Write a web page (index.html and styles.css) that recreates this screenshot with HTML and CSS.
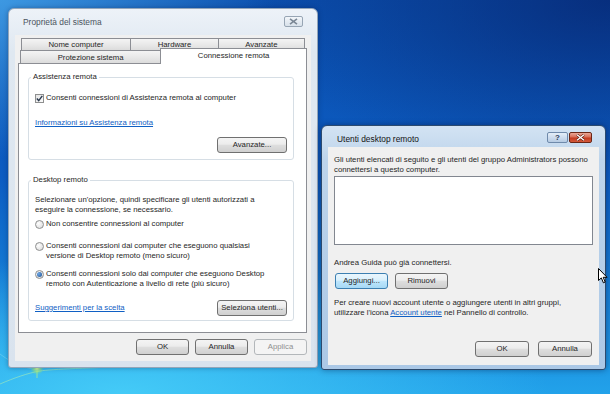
FILE: index.html
```html
<!DOCTYPE html>
<html lang="it">
<head>
<meta charset="utf-8">
<title>Proprietà del sistema</title>
<link rel="stylesheet" href="styles.css">
</head>
<body>
<div class="desktop">
  <svg class="swirl" width="140" height="60" viewBox="0 0 140 60">
    <defs>
      <radialGradient id="glow" cx="0.5" cy="0.5" r="0.5">
        <stop offset="0" stop-color="#f4ff9a" stop-opacity="0.95"/>
        <stop offset="0.45" stop-color="#b8f06a" stop-opacity="0.6"/>
        <stop offset="1" stop-color="#7fe07a" stop-opacity="0"/>
      </radialGradient>
    </defs>
    <path d="M0 44 C 14 38, 28 33, 40 31 S 90 28, 140 26" fill="none" stroke="#aef0b0" stroke-opacity="0.55" stroke-width="1"/>
    <path d="M0 14 C 10 22, 24 28, 38 30" fill="none" stroke="#9fe8f4" stroke-opacity="0.35" stroke-width="1"/>
    <path d="M37 31 L37 38" stroke="#b6ef8a" stroke-opacity="0.6" stroke-width="1.2"/>
    <circle cx="37" cy="28" r="7" fill="url(#glow)"/>
  </svg>

  <section class="win win-sys">
    <header class="titlebar">
      <span class="title">Proprietà del sistema</span>
      <span class="cap cap-close-inactive">
        <svg width="9" height="7" viewBox="0 0 9 7"><path d="M1 0.8 L8 6.2 M8 0.8 L1 6.2" stroke="#7c8896" stroke-width="1.6" fill="none"/></svg>
      </span>
    </header>
    <div class="client">
      <div class="tabs">
        <div class="tabrow row-back">
          <div class="tab">Nome computer</div>
          <div class="tab">Hardware</div>
          <div class="tab">Avanzate</div>
        </div>
        <div class="tabrow row-front">
          <div class="tab">Protezione sistema</div>
          <div class="tab tab-sel">Connessione remota</div>
        </div>
      </div>
      <div class="panel">
        <fieldset class="group g-assist">
          <legend>Assistenza remota</legend>
          <div class="check-row">
            <span class="checkbox"><svg width="7" height="7" viewBox="0 0 7 7"><path d="M0.8 3.6 L2.7 5.6 L6.3 0.9" stroke="#2b3a4e" stroke-width="1.4" fill="none"/></svg></span>
            <span>Consenti connessioni di Assistenza remota al computer</span>
          </div>
          <a class="link link-info">Informazioni su Assistenza remota</a>
          <div class="row-end"><button class="btn btn-wide">Avanzate...</button></div>
        </fieldset>
        <fieldset class="group g-desk">
          <legend>Desktop remoto</legend>
          <p class="desc">Selezionare un'opzione, quindi specificare gli utenti autorizzati a<br>eseguire la connessione, se necessario.</p>
          <div class="radio-row r1"><span class="radio"></span><span>Non consentire connessioni al computer</span></div>
          <div class="radio-row r2"><span class="radio"></span><span>Consenti connessioni dai computer che eseguono qualsiasi<br>versione di Desktop remoto (meno sicuro)</span></div>
          <div class="radio-row r3"><span class="radio radio-on"></span><span>Consenti connessioni solo dai computer che eseguono Desktop<br>remoto con Autenticazione a livello di rete (più sicuro)</span></div>
          <div class="row-between">
            <a class="link">Suggerimenti per la scelta</a>
            <button class="btn btn-wide">Seleziona utenti...</button>
          </div>
        </fieldset>
      </div>
      <div class="dlg-buttons">
        <button class="btn btn-std">OK</button>
        <button class="btn btn-std">Annulla</button>
        <button class="btn btn-std btn-disabled">Applica</button>
      </div>
    </div>
  </section>

  <section class="win win-rdu">
    <header class="titlebar">
      <span class="title">Utenti desktop remoto</span>
      <span class="caps">
        <span class="cap cap-help">?</span>
        <span class="cap cap-close">
          <svg width="9" height="7" viewBox="0 0 9 7"><path d="M1 0.8 L8 6.2 M8 0.8 L1 6.2" stroke="#5a1a10" stroke-width="2.6" fill="none"/><path d="M1 0.8 L8 6.2 M8 0.8 L1 6.2" stroke="#ffffff" stroke-width="1.4" fill="none"/></svg>
        </span>
      </span>
    </header>
    <div class="client">
      <p class="para">Gli utenti elencati di seguito e gli utenti del gruppo Administrators possono<br>connettersi a questo computer.</p>
      <div class="list"></div>
      <p class="para note-line">Andrea Guida può già connettersi.</p>
      <div class="row-btns">
        <button class="btn btn-std btn-focus">Aggiungi...</button>
        <button class="btn btn-std">Rimuovi</button>
      </div>
      <p class="para para2">Per creare nuovi account utente o aggiungere utenti in altri gruppi,<br>utilizzare l'icona <a class="link">Account utente</a> nel Pannello di controllo.</p>
      <div class="row-ok">
        <button class="btn btn-ok">OK</button>
        <button class="btn btn-ok">Annulla</button>
      </div>
    </div>
  </section>

  <svg class="cursor" width="10" height="16" viewBox="0 0 10 16">
    <path d="M0.5 0.5 L0.5 12.5 L3.3 9.9 L5.4 14.8 L7.2 14 L5.2 9.3 L9 9.3 Z" fill="#ffffff" stroke="#000000" stroke-width="1"/>
  </svg>
</div>
</body>
</html>
```

FILE: styles.css
```css
* { box-sizing: border-box; }

html, body {
  margin: 0;
  padding: 0;
}

body {
  width: 610px;
  height: 394px;
  overflow: hidden;
  font-family: "Liberation Sans", Arial, sans-serif;
  font-size: 7.75px;
  line-height: 10px;
  color: #262626;
}

.desktop {
  position: relative;
  width: 610px;
  height: 394px;
  overflow: hidden;
  background:
    radial-gradient(ellipse 60% 45% at 100% 0%, rgba(6, 36, 110, 0.75), rgba(6, 36, 110, 0) 100%),
    radial-gradient(ellipse 45% 40% at 0% 0%, rgba(70, 165, 235, 0.85), rgba(70, 165, 235, 0) 100%),
    radial-gradient(ellipse 70% 35% at 20% 100%, rgba(70, 205, 248, 0.95), rgba(70, 205, 248, 0) 100%),
    linear-gradient(to bottom, #0b4fae 0%, #0c5cc2 45%, #1784da 78%, #22a2ea 100%);
}

.swirl {
  position: absolute;
  left: 0;
  top: 340px;
}

.cursor {
  position: absolute;
  left: 598px;
  top: 268px;
}

/* ---------- windows ---------- */
.win {
  position: absolute;
  display: flex;
  flex-direction: column;
  border: 1px solid;
  border-radius: 6px 6px 3px 3px;
}

.win-sys {
  left: 8px;
  top: 8px;
  width: 310px;
  height: 360px;
  padding: 0 6px 6px;
  border-color: #93a5b9;
  background: linear-gradient(to bottom, #edf2f8 0%, #dfe8f1 12%, #d9e3ee 100%);
  box-shadow: 0 0 5px rgba(0, 20, 60, 0.35);
}

.win-rdu {
  left: 321px;
  top: 125px;
  width: 285px;
  height: 245px;
  padding: 0 6px 4px;
  border-color: #2c4a6e;
  background: linear-gradient(to bottom, #d3e3f3 0%, #bdd4eb 14%, #abc8e6 100%);
  box-shadow: 0 0 6px rgba(0, 20, 60, 0.45);
}

.titlebar {
  display: flex;
  align-items: flex-start;
  flex: none;
}

.win-sys .titlebar {
  height: 26px;
  padding: 7px 8px 0 8px;
}

.win-rdu .titlebar {
  height: 21px;
  padding: 5px 7px 0 9px;
}

.title {
  font-size: 8.4px;
  line-height: 12px;
  white-space: nowrap;
}

.win-sys .title { color: #4a545e; }
.win-rdu .title { color: #141414; margin-top: 2px; }

.cap {
  display: flex;
  align-items: center;
  justify-content: center;
  height: 11px;
  border: 1px solid;
  border-radius: 2px;
}

.cap-close-inactive {
  margin-left: auto;
  width: 19px;
  border-color: #97a5b4;
  background: linear-gradient(to bottom, #f3f6fa 0%, #e4ebf2 50%, #d8e1ea 100%);
}

.caps {
  margin-left: auto;
  margin-top: 1px;
  display: flex;
  gap: 1px;
}

.cap-help {
  width: 21px;
  border-color: #6f8aab;
  background: linear-gradient(to bottom, #e4eef8 0%, #cddcee 50%, #b6cbe3 100%);
  color: #2a3d57;
  font-size: 8px;
  font-weight: bold;
  line-height: 9px;
}

.cap-close {
  width: 23px;
  border-color: #6a2616;
  background: linear-gradient(to bottom, #eaa797 0%, #d86e58 45%, #c3391f 55%, #d35a3c 100%);
}

.client {
  flex: 1;
  display: flex;
  flex-direction: column;
  background: #f0f0f0;
}

.win-sys .client { padding: 3px 4px 0 3px; }
.win-rdu .client { padding: 8px 6px 8px 6px; }

/* ---------- tabs ---------- */
.tabs {
  display: flex;
  flex-direction: column;
}

.tabrow { display: flex; }

.row-back {
  height: 12px;
  margin: 0 2px 0 3px;
}

.row-front {
  height: 13px;
  margin: 0 0 0 2px;
}

.tab {
  flex: 1 1 auto;
  border: 1px solid #8c8e94;
  border-bottom: none;
  background: linear-gradient(to bottom, #f4f4f4 0%, #e9e9e9 50%, #dcdcdc 100%);
  text-align: center;
  white-space: nowrap;
  padding-top: 1px;
}

.row-front .tab { padding-top: 2px; }

.tab + .tab { margin-left: -1px; }

.row-front .tab-sel {
  position: relative;
  z-index: 1;
  height: 16px;
  margin-top: -2px;
  background: #ffffff;
  padding-top: 2px;
}

.panel {
  height: 270px;
  border: 1px solid #8c8e94;
  background: #ffffff;
  padding: 8px 12px 0 9px;
}

/* ---------- groups ---------- */
.group {
  margin: 0;
  min-width: 0;
  border: 1px solid #d6dee5;
  border-radius: 3px;
  padding: 0 6px 6px 6px;
}

.group legend {
  margin-left: -4px;
  padding: 0 2px;
  line-height: 10px;
}

.g-desk {
  margin-top: 15px;
  padding-bottom: 4px;
}

.check-row {
  display: flex;
  align-items: center;
  gap: 2px;
  margin-top: 11px;
  height: 10px;
  white-space: nowrap;
}

.checkbox {
  flex: none;
  width: 9px;
  height: 9px;
  border: 1px solid #8e8f8f;
  background: linear-gradient(to bottom right, #e4e4e4, #fbfbfb);
  display: flex;
  align-items: center;
  justify-content: center;
}

.link {
  color: #1060c4;
  text-decoration: underline;
  white-space: nowrap;
}

.link-info {
  display: block;
  margin-top: 15px;
}

.row-end {
  display: flex;
  justify-content: flex-end;
  margin-top: 9px;
}

.desc {
  margin: 10px 0 0;
  white-space: nowrap;
}

.radio-row {
  display: flex;
  align-items: flex-start;
  gap: 2px;
  white-space: nowrap;
}

.r1 { margin-top: 4px; }
.r2 { margin-top: 12px; }
.r3 { margin-top: 8px; }

.radio {
  flex: none;
  width: 9px;
  height: 9px;
  margin-top: 0.5px;
  border: 1px solid #8e8f8f;
  border-radius: 50%;
  background: radial-gradient(circle at 35% 35%, #fdfdfd, #d9d9d9);
  display: flex;
  align-items: center;
  justify-content: center;
}

.radio-on::after {
  content: "";
  width: 5px;
  height: 5px;
  border-radius: 50%;
  background: radial-gradient(circle at 35% 35%, #6fa8e6, #1d4f8e);
}

.row-between {
  display: flex;
  align-items: center;
  justify-content: space-between;
  margin-top: 11px;
}

/* ---------- buttons ---------- */
.btn {
  font: inherit;
  font-size: 7.75px;
  height: 16px;
  padding: 0;
  border: 1px solid #707070;
  border-radius: 3px;
  background: linear-gradient(to bottom, #f4f4f4 0%, #ececec 45%, #dedede 50%, #d0d0d0 100%);
  color: #262626;
  line-height: 14px;
  text-align: center;
  white-space: nowrap;
}

.btn-wide { width: 70px; }
.btn-std { width: 53px; }
.btn-ok { width: 54px; }

.btn-disabled {
  border-color: #b3b7ba;
  background: #f4f4f4;
  color: #8f8f8f;
}

.btn-focus {
  border-color: #3c7fb1;
  background: linear-gradient(to bottom, #eaf6fd 0%, #d9f0fc 45%, #bee6fd 50%, #a7d9f5 100%);
}

.dlg-buttons {
  display: flex;
  justify-content: flex-end;
  gap: 6px;
  margin-top: 6px;
}

/* ---------- right dialog ---------- */
.para {
  margin: 0;
  white-space: nowrap;
}

.list {
  flex: none;
  height: 69px;
  margin-top: 1px;
  border: 1px solid #828790;
  background: #ffffff;
}

.note-line { margin-top: 13px; }

.row-btns {
  display: flex;
  gap: 7px;
  margin-top: 5px;
  padding-left: 1px;
}

.para2 { margin-top: 9px; }

.row-ok {
  margin-top: auto;
  display: flex;
  justify-content: flex-end;
  gap: 9px;
  padding-right: 1px;
}
```
